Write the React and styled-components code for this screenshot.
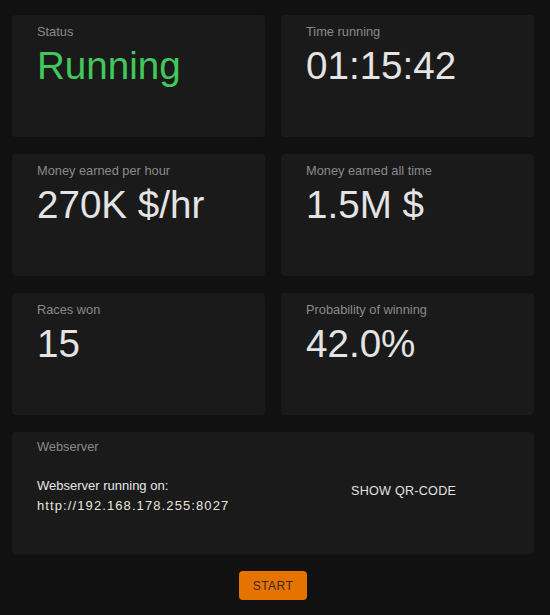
import React from "react";
import styled, { createGlobalStyle } from "styled-components";

const Global = createGlobalStyle`
  html, body { margin: 0; padding: 0; background: #111111; }
  body { font-family: "Liberation Sans", Arial, sans-serif; }
`;

const Page = styled.div`
  padding: 15px 16px 16px 12px;
  display: flex;
  flex-direction: column;
  align-items: center;
`;

const Grid = styled.div`
  width: 522px;
  display: grid;
  grid-template-columns: 1fr 1fr;
  column-gap: 16px;
  row-gap: 17px;
`;

const Card = styled.div`
  background: #1a1a1a;
  border-radius: 4px;
  height: 122px;
  box-sizing: border-box;
  padding: ${(p) => (p.$wide ? "8px" : "10px")} 25px 0 25px;
  grid-column: ${(p) => (p.$wide ? "1 / span 2" : "auto")};
`;

const Label = styled.div`
  font-size: 12.8px;
  line-height: 14.7px;
  color: #8a8a8a;
  margin-bottom: 4px;
`;

const Value = styled.div`
  font-size: 38.6px;
  line-height: 44px;
  color: ${(p) => p.$color || "#e4e4e4"};
`;

const ServerRow = styled.div`
  display: flex;
  align-items: flex-start;
  margin-top: 21.5px;
`;

const ServerInfo = styled.div`
  flex: 0 0 306px;
  font-size: 13px;
  line-height: 20px;
  color: #e6e6e6;
`;

const Url = styled.div`
  letter-spacing: 1.1px;
  color: #e8e5dc;
`;

const TextButton = styled.button`
  background: none;
  border: none;
  padding: 0 8px;
  margin-top: 7px;
  font-family: "Liberation Sans", Arial, sans-serif;
  font-size: 12.6px;
  line-height: 16px;
  letter-spacing: 0.25px;
  color: #e2e2e2;
  text-transform: uppercase;
  cursor: pointer;
`;

const StartButton = styled.button`
  margin-top: 17px;
  height: 29px;
  padding: 0 14px;
  border: none;
  border-radius: 4px;
  background: #e67300;
  color: #3b2a18;
  font-family: "Liberation Sans", Arial, sans-serif;
  font-size: 12px;
  letter-spacing: 0.5px;
  text-transform: uppercase;
  cursor: pointer;
`;

const stats = [
  { label: "Status", value: "Running", color: "#41c85a" },
  { label: "Time running", value: "01:15:42" },
  { label: "Money earned per hour", value: "270K $/hr" },
  { label: "Money earned all time", value: "1.5M $" },
  { label: "Races won", value: "15" },
  { label: "Probability of winning", value: "42.0%" },
];

export default function App() {
  return (
    <>
      <Global />
      <Page>
        <Grid>
          {stats.map((s) => (
            <Card key={s.label}>
              <Label>{s.label}</Label>
              <Value $color={s.color}>{s.value}</Value>
            </Card>
          ))}
          <Card $wide>
            <Label>Webserver</Label>
            <ServerRow>
              <ServerInfo>
                <div>Webserver running on:</div>
                <Url>http://192.168.178.255:8027</Url>
              </ServerInfo>
              <TextButton>Show QR-Code</TextButton>
            </ServerRow>
          </Card>
        </Grid>
        <StartButton>Start</StartButton>
      </Page>
    </>
  );
}
